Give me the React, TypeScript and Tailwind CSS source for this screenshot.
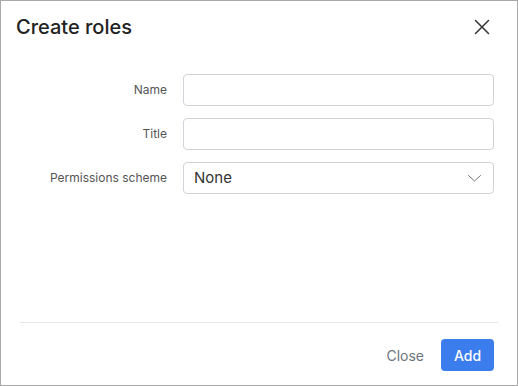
import React, { useState } from "react";

const fields = [
  { label: "Name", key: "name" },
  { label: "Title", key: "title" },
];

const CloseIcon = () => (
  <svg width="16" height="16" viewBox="0 0 16 16" fill="none" stroke="#333" strokeWidth="1.5" strokeLinecap="round">
    <path d="M1.5 1.5 L14.5 14.5 M14.5 1.5 L1.5 14.5" />
  </svg>
);

const Chevron = () => (
  <svg width="15" height="8" viewBox="0 0 15 8" fill="none" stroke="#777" strokeWidth="1" strokeLinecap="round" strokeLinejoin="round">
    <path d="M1.5 1.5 L7.5 7 L13.5 1.5" />
  </svg>
);

const App = () => {
  const [values, setValues] = useState<Record<string, string>>({ name: "", title: "" });

  return (
    <div
      className="w-[518px] h-[386px] bg-white border border-[#a9a9a9] flex flex-col text-[#212529]"
      style={{ fontFamily: "Inter, 'Noto Sans', sans-serif" }}
    >
      <div className="flex items-center justify-between pl-[15px] pr-[27px] pt-[12px]">
        <h1 className="text-[20px] leading-[28px] font-medium text-[#222]">Create roles</h1>
        <button className="w-4 h-4 flex items-center justify-center">
          <CloseIcon />
        </button>
      </div>

      <div className="grid grid-cols-[143px_1fr] gap-x-4 gap-y-3 pl-[23px] pr-[23px] mt-[33px]">
        {fields.map((f) => (
          <React.Fragment key={f.key}>
            <label className="text-[12px] text-[#555] text-right self-center">{f.label}</label>
            <input
              className="h-8 border border-[#d0d4d9] rounded-[4px] px-3 text-[14px] outline-none"
              value={values[f.key]}
              onChange={(e) => setValues({ ...values, [f.key]: e.target.value })}
            />
          </React.Fragment>
        ))}
        <label className="text-[12px] text-[#555] text-right self-center">Permissions scheme</label>
        <div className="h-8 border border-[#d0d4d9] rounded-[4px] pl-[10px] pr-[6px] flex items-center justify-between">
          <span className="text-[15px] text-[#333]">None</span>
          <span className="mr-[5px] flex items-center">
            <Chevron />
          </span>
        </div>
      </div>

      <div className="flex-1" />

      <div className="mx-[19px] border-t border-[#e6e6e6]" />
      <div className="flex justify-end items-center gap-1 pr-[23px] pt-[16px] pb-[14px]">
        <button className="h-8 px-[13px] text-[14px] text-[#6c757d]">Close</button>
        <button className="h-8 w-[53px] rounded-[4px] bg-[#3b7ded] text-white text-[14px] font-medium">Add</button>
      </div>
    </div>
  );
};

export default App;
